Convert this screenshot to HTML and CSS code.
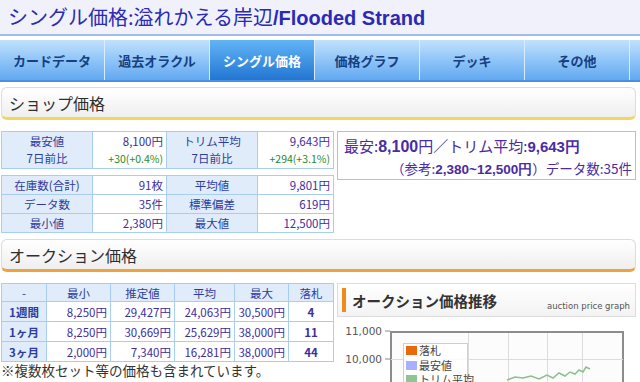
FILE: index.html
```html
<!DOCTYPE html>
<html lang="ja">
<head>
<meta charset="utf-8">
<title>シングル価格</title>
<link rel="stylesheet" href="styles.css">
</head>
<body>
<header class="title"><h1>シングル価格:溢れかえる岸辺<span class="en">/Flooded Strand</span></h1></header>
<nav class="tabs">
  <a class="tab">カードデータ</a>
  <a class="tab">過去オラクル</a>
  <a class="tab active">シングル価格</a>
  <a class="tab">価格グラフ</a>
  <a class="tab">デッキ</a>
  <a class="tab">その他</a>
  <span class="tab-rest"></span>
</nav>

<div class="sec-head shop-head"><h2>ショップ価格</h2></div>
<div class="shop">
  <div class="shop-tables">
    <table class="grid t1">
      <colgroup><col class="c1"><col class="c2"><col class="c3"><col class="c4"></colgroup>
      <tr>
        <th>最安値<br>7日前比</th>
        <td>8,100円<br><span class="up">+30(+0.4%)</span></td>
        <th>トリム平均<br>7日前比</th>
        <td>9,643円<br><span class="up">+294(+3.1%)</span></td>
      </tr>
    </table>
    <table class="grid t2">
      <colgroup><col class="c1"><col class="c2"><col class="c3"><col class="c4"></colgroup>
      <tr><th>在庫数(合計)</th><td>91枚</td><th>平均値</th><td>9,801円</td></tr>
      <tr><th>データ数</th><td>35件</td><th>標準偏差</th><td>619円</td></tr>
      <tr><th>最小値</th><td>2,380円</td><th>最大値</th><td>12,500円</td></tr>
    </table>
  </div>
  <div class="summary">
    <p class="sum1">最安:<b class="big">8,100</b>円／トリム平均:<b>9,643円</b></p>
    <p class="sum2">（参考:<b>2,380~12,500円</b>）データ数:35件</p>
  </div>
</div>

<div class="sec-head auc-head"><h2>オークション価格</h2></div>
<div class="auction">
  <div class="auc-left">
    <table class="grid t3">
      <colgroup><col class="a1"><col class="a2"><col class="a3"><col class="a4"><col class="a5"><col class="a6"></colgroup>
      <tr class="hd"><th>-</th><th>最小</th><th>推定値</th><th>平均</th><th>最大</th><th>落札</th></tr>
      <tr><th class="per">1週間</th><td>8,250円</td><td>29,427円</td><td>24,063円</td><td>30,500円</td><td class="cnt">4</td></tr>
      <tr><th class="per">1ヶ月</th><td>8,250円</td><td>30,669円</td><td>25,629円</td><td>38,000円</td><td class="cnt">11</td></tr>
      <tr><th class="per">3ヶ月</th><td>2,000円</td><td>7,340円</td><td>16,281円</td><td>38,000円</td><td class="cnt">44</td></tr>
    </table>
    <p class="note">※複数枚セット等の価格も含まれています。</p>
  </div>
  <div class="graph">
    <div class="graph-head">
      <span class="bar"></span>
      <h3>オークション価格推移</h3>
      <span class="sub">auction price graph</span>
    </div>
    <svg class="chart" width="299" height="70" viewBox="0 0 299 70">
      <text x="45" y="18" class="ax" text-anchor="end">11,000</text>
      <text x="45" y="46" class="ax" text-anchor="end">10,000</text>
      <line x1="48" y1="14" x2="53" y2="14" stroke="#888"/>
      <line x1="48" y1="42" x2="53" y2="42" stroke="#888"/>
      <rect x="54" y="15" width="232" height="70" fill="#fcfcfd" stroke="#8c8c8c" stroke-width="2"/>
      <g stroke="#dcdcdc" stroke-width="1">
        <line x1="54" y1="42.5" x2="286" y2="42.5"/>
        <line x1="131.5" y1="16" x2="131.5" y2="70"/>
        <line x1="171.5" y1="16" x2="171.5" y2="70"/>
        <line x1="210.5" y1="16" x2="210.5" y2="70"/>
        <line x1="245.5" y1="16" x2="245.5" y2="70"/>
      </g>
      <polyline points="112,60 116,55 120,54 124,56" fill="none" stroke="#c8d8c0" stroke-width="1.5"/>
      <polyline points="170,63 178,60 186,61 194,59 202,62 210,58 216,61 222,56 228,59 233,55 238,57 242,53 246,55 249,50 253,52" fill="none" stroke="#8cc08c" stroke-width="1.5"/>
      <rect x="66.5" y="26.5" width="64" height="50" fill="#fff" fill-opacity="0.85" stroke="#cfcfcf"/>
      <rect x="69" y="29" width="11" height="9" fill="#e8680c"/>
      <text x="82" y="38" class="lg">落札</text>
      <rect x="69" y="44" width="11" height="9" fill="#aab0ff"/>
      <text x="82" y="53" class="lg">最安値</text>
      <rect x="69" y="58" width="11" height="9" fill="#90c490"/>
      <text x="82" y="67" class="lg">トリム平均</text>
    </svg>
  </div>
</div>
</body>
</html>
```
FILE: styles.css
```css
* { box-sizing: border-box; }
html, body { margin: 0; padding: 0; }
body {
  width: 640px;
  height: 382px;
  overflow: hidden;
  background: #fff;
  color: #333;
  font-family: "Noto Sans CJK JP", "Noto Sans", sans-serif;
}

/* title */
.title {
  height: 36px;
  background: #f0f1fb;
  border-bottom: 2px solid #a2bbe8;
  padding-left: 8px;
}
.title h1 {
  margin: 0;
  font-size: 20px;
  font-weight: normal;
  line-height: 34px;
  color: #2a2ab4;
  white-space: nowrap;
}
.title .en {
  font-family: "Liberation Sans", Arial, sans-serif;
  font-weight: bold;
}

/* tabs */
.tabs {
  display: flex;
  margin-top: 4px;
  height: 42px;
  background: linear-gradient(#c2e1fd, #8fc5f8 50%, #62a8f0);
  border-bottom: 2px solid #4a90e2;
}
.tab {
  width: 105px;
  display: flex;
  align-items: center;
  justify-content: center;
  font-size: 13px;
  font-weight: bold;
  color: #173e80;
  border-right: 1px solid #d8edff;
}
.tab.active {
  background: linear-gradient(#62b4f6, #2276d2);
  color: #fff;
}
.tab-rest { flex: 1; }

/* section heads */
.sec-head {
  margin: 5px 4px 0 1px;
  height: 33px;
  border: 1px solid #dcdcdc;
  border-radius: 6px;
  background: linear-gradient(#ffffff, #efefef);
  padding-left: 7px;
  display: flex;
  align-items: center;
}
.sec-head h2 {
  margin: 0;
  font-size: 16px;
  font-weight: normal;
  color: #2e2e2e;
}
.shop-head { border-bottom: 3px solid #f4d75a; }
.auc-head { border-bottom: 3px solid #f0a23c; margin-top: 6px; }

/* shop */
.shop {
  display: flex;
  gap: 4px;
  margin-top: 11px;
  padding-left: 1px;
}
.shop-tables {
  width: 332px;
  display: flex;
  flex-direction: column;
  gap: 6px;
}
.grid {
  border-collapse: collapse;
  table-layout: fixed;
  width: 332px;
  font-size: 11.5px;
}
.grid th, .grid td {
  border: 1px solid #a9cdf0;
  padding: 0 3px;
  height: 19px;
  line-height: 16px;
  white-space: nowrap;
}
.grid th {
  background: #e1ecfa;
  color: #2c3c9e;
  font-weight: normal;
  text-align: center;
}
.grid td {
  color: #3d2d9e;
  text-align: right;
}
.t1 th, .t1 td { height: 37px; line-height: 17px; }
.t1 .up { color: #2a8a2a; font-size: 10.5px; }
.c1 { width: 91px; } .c2 { width: 74px; } .c3 { width: 91px; } .c4 { width: 76px; }

.summary {
  width: 299px;
  height: 49px;
  border: 1px solid #aac2ea;
  padding: 3px 3px 0 6px;
  color: #4b2ba2;
}
.summary p { margin: 0; white-space: nowrap; }
.sum1 { font-size: 15px; line-height: 22px; }
.sum1 b { font-family: "Liberation Sans", Arial, sans-serif; }
.sum1 .big { font-size: 16px; }
.sum2 { font-size: 13.5px; line-height: 20px; text-align: right; }
.sum2 b { font-family: "Liberation Sans", Arial, sans-serif; }

/* auction */
.auction {
  display: flex;
  gap: 4px;
  margin-top: 11px;
  padding-left: 1px;
}
.auc-left { width: 332px; }
.t3 th, .t3 td { height: 20px; }
.t3 .hd th { height: 18px; }
.t3 .per { font-weight: bold; }
.t3 .cnt { text-align: center; font-weight: bold; }
.a1 { width: 45px; } .a2 { width: 64px; } .a3 { width: 64px; }
.a4 { width: 60px; } .a5 { width: 54px; } .a6 { width: 45px; }
.note {
  margin: 0;
  font-size: 13.5px;
  line-height: 17px;
  color: #333;
  white-space: nowrap;
}

.graph { width: 299px; }
.graph-head {
  height: 34px;
  border: 1px solid #dddddd;
  background: linear-gradient(#ffffff, #f3f3f3);
  display: flex;
  align-items: center;
  padding-left: 4px;
}
.graph-head .bar {
  width: 4px;
  height: 24px;
  background: #f08a1c;
  margin-right: 6px;
}
.graph-head h3 {
  margin: 0;
  font-size: 14.5px;
  font-weight: bold;
  color: #333;
}
.graph-head .sub {
  margin-left: auto;
  margin-right: 5px;
  align-self: flex-end;
  margin-bottom: 5px;
  font-family: "DejaVu Sans", sans-serif;
  font-size: 8.5px;
  color: #555;
}
.chart { display: block; }
.chart .ax { font-family: "DejaVu Sans", sans-serif; font-size: 10.5px; fill: #555; }
.chart .lg { font-family: "Noto Sans CJK JP", sans-serif; font-size: 11px; fill: #444; }
```
